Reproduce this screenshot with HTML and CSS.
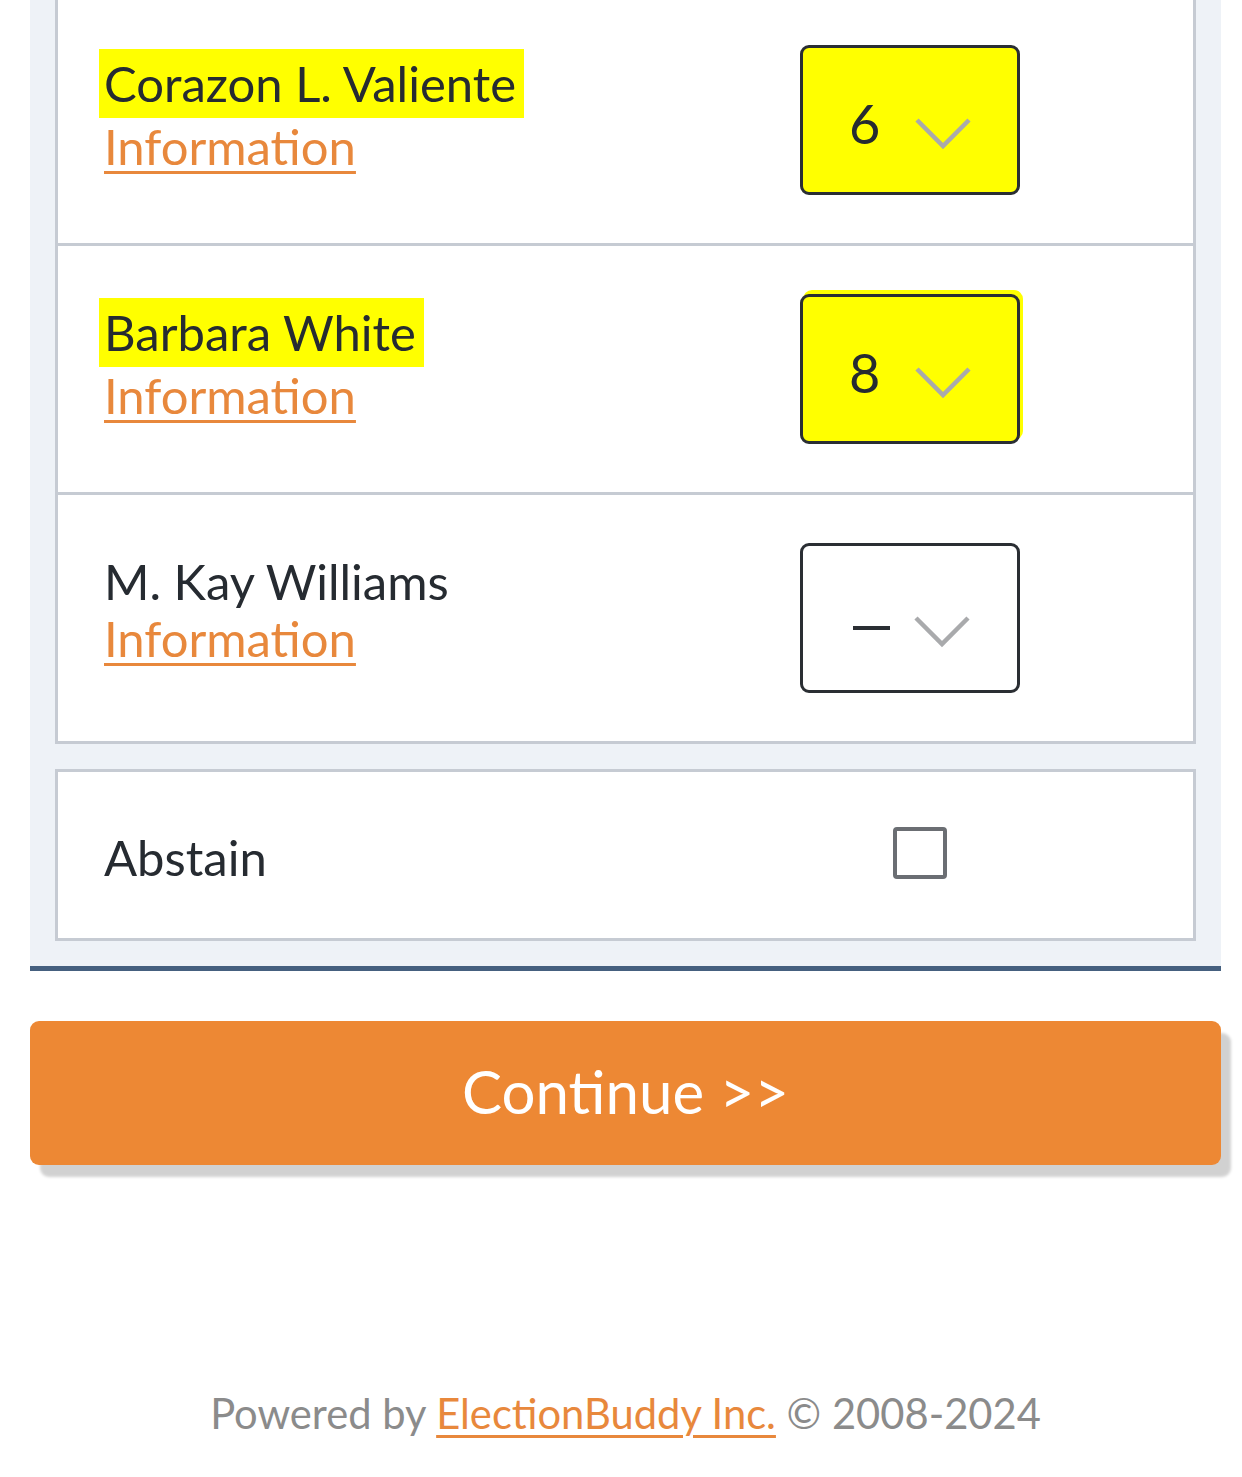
FILE: index.html
```html
<!DOCTYPE html>
<html lang="en">
<head>
<meta charset="utf-8">
<title>Ballot</title>
<link rel="stylesheet" href="styles.css">
</head>
<body>
<main class="page">
  <section class="ballot">
    <div class="card">
      <div class="row">
        <div class="candidate">
          <span class="name hl">Corazon L. Valiente</span>
          <a class="info" href="#">Information</a>
        </div>
        <div class="select hl-box">
          <span class="val">6</span>
          <svg class="chev" viewBox="0 0 56 32" width="56" height="32"><path d="M2 2 L28 28 L54 2" fill="none" stroke="#a9aaac" stroke-width="4.5"/></svg>
        </div>
      </div>
      <div class="row">
        <div class="candidate">
          <span class="name hl">Barbara White</span>
          <a class="info" href="#">Information</a>
        </div>
        <div class="select hl-box shifted">
          <span class="val">8</span>
          <svg class="chev" viewBox="0 0 56 32" width="56" height="32"><path d="M2 2 L28 28 L54 2" fill="none" stroke="#a9aaac" stroke-width="4.5"/></svg>
        </div>
      </div>
      <div class="row last">
        <div class="candidate">
          <span class="name">M. Kay Williams</span>
          <a class="info" href="#">Information</a>
        </div>
        <div class="select">
          <span class="dash"></span>
          <svg class="chev" viewBox="0 0 56 32" width="56" height="32"><path d="M2 2 L28 28 L54 2" fill="none" stroke="#a9aaac" stroke-width="4.5"/></svg>
        </div>
      </div>
    </div>
    <div class="card abstain">
      <span class="name">Abstain</span>
      <span class="checkbox"></span>
    </div>
  </section>
  <button class="continue" type="button">Continue &gt;&gt;</button>
  <footer class="footer">Powered by <a href="#">ElectionBuddy Inc.</a> © 2008-2024</footer>
</main>
</body>
</html>
```
FILE: styles.css
```css
html, body {
  margin: 0;
  padding: 0;
  background: #ffffff;
}
body {
  font-family: Lato, "Open Sans", sans-serif;
  color: #262b31;
}
.page {
  width: 1191px;
  margin: 0 0 0 30px;
}
.ballot {
  margin-top: -31px;
  background: #eef2f7;
  padding: 25px;
  border-bottom: 5px solid #45607f;
  display: flex;
  flex-direction: column;
  gap: 25px;
}
.card {
  background: #ffffff;
  border: 3px solid #c6cbd3;
}
.row {
  display: flex;
  align-items: center;
  padding: 48px 0;
  border-bottom: 3px solid #c6cbd3;
}
.row.last {
  border-bottom: none;
}
.candidate {
  flex: 1;
  display: flex;
  flex-direction: column;
  align-items: flex-start;
  padding-left: 46px;
  padding-bottom: 18px;
}
.name {
  font-size: 49px;
  line-height: 58px;
  color: #262b31;
}
.hl {
  background: #ffff00;
  padding: 5px 8px 6px 5px;
  margin-left: -5px;
}
.info {
  font-size: 49px;
  line-height: 56px;
  color: #e8883c;
  text-decoration: underline;
  text-decoration-thickness: 3px;
  text-underline-offset: 6px;
}
.select {
  width: 168px;
  height: 144px;
  margin-right: 173px;
  border: 3px solid #2a2e33;
  border-radius: 9px;
  display: flex;
  align-items: center;
  padding-left: 46px;
  box-sizing: content-box;
  background: #ffffff;
}
.hl-box {
  background: #ffff00;
}
.shifted {
  box-shadow: 3px -4px 0 #ffff00;
}
.val {
  font-size: 54px;
  line-height: 1;
  width: 66px;
  margin-top: 8px;
}
.dash {
  display: block;
  width: 37px;
  height: 4px;
  background: #2a2e33;
  margin: 20px 24px 0 4px;
}
.chev {
  display: block;
  margin-top: 28px;
}
.abstain {
  display: flex;
  align-items: center;
  height: 166px;
  padding-left: 46px;
}
.abstain .name {
  flex: 1;
  margin-top: 4px;
}
.checkbox {
  width: 46px;
  height: 44px;
  border: 4px solid #6b6e73;
  border-radius: 4px;
  margin-right: 246px;
  margin-top: -5px;
}
.continue {
  display: block;
  width: 100%;
  height: 144px;
  margin-top: 50px;
  border: none;
  border-radius: 9px;
  background: #ed8834;
  color: #ffffff;
  font-family: Lato, "Open Sans", sans-serif;
  font-size: 60px;
  padding: 0 0 4px;
  box-shadow: 10px 12px 3px rgba(0, 0, 0, 0.18);
}
.footer {
  margin-top: 218px;
  text-align: center;
  font-size: 41.7px;
  line-height: 60px;
  color: #8b8b8b;
}
.footer a {
  color: #e8883c;
  text-decoration: underline;
  text-decoration-thickness: 3px;
  text-underline-offset: 6px;
}
```
